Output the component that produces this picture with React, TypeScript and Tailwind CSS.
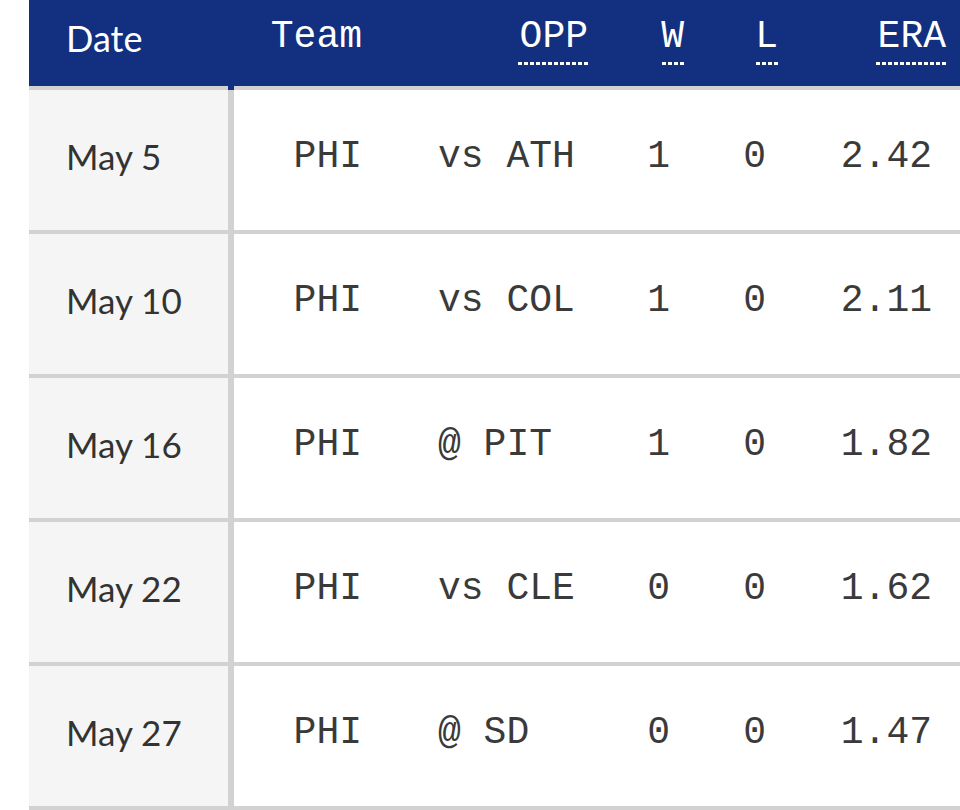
import React from "react";

const rows = [
  ["May 5", "PHI", "vs ATH", "1", "0", "2.42"],
  ["May 10", "PHI", "vs COL", "1", "0", "2.11"],
  ["May 16", "PHI", "@ PIT", "1", "0", "1.82"],
  ["May 22", "PHI", "vs CLE", "0", "0", "1.62"],
  ["May 27", "PHI", "@ SD", "0", "0", "1.47"],
];

const mono = "font-['Liberation_Mono',monospace]";
const sans = "font-['Lato','Open_Sans',sans-serif]";

function Dots({ w }: { w: string }) {
  return (
    <div
      className={`h-[3px] mt-[5px] ml-auto ${w} bg-[repeating-linear-gradient(90deg,#ffffff_0px,#ffffff_4px,transparent_4px,transparent_6px)]`}
    />
  );
}

export default function App() {
  return (
    <div className="w-[960px] h-[810px] bg-white pl-[29px] overflow-hidden">
      <div className="flex h-[90px]">
        <div className={`w-[199px] bg-[#12307f] border-b-4 border-[#d2d2d2] pl-[37px] pt-[18px] text-white text-[36px] leading-[40px] ${sans}`}>
          Date
        </div>
        <div className="w-[6px] bg-[#12307f]" />
        <div className={`flex-1 flex bg-[#12307f] border-b-4 border-[#d2d2d2] text-white text-[38px] leading-[40px] ${mono}`}>
          <div className="w-[128px] text-right pt-[17px]">Team</div>
          <div className="w-[238px] pr-[12px] pt-[17px] flex flex-col items-end">
            <span>OPP</span>
            <Dots w="w-[70px]" />
          </div>
          <div className="w-[100px] pr-[16px] pt-[17px] flex flex-col items-end">
            <span>W</span>
            <Dots w="w-[22px]" />
          </div>
          <div className="w-[90px] pr-[12px] pt-[17px] flex flex-col items-end">
            <span>L</span>
            <Dots w="w-[22px]" />
          </div>
          <div className="w-[170px] pr-[14px] pt-[17px] flex flex-col items-end">
            <span>ERA</span>
            <Dots w="w-[70px]" />
          </div>
        </div>
      </div>
      {rows.map((r, i) => (
        <div key={i} className="flex h-[144px]">
          <div className={`w-[199px] bg-[#f5f5f5] border-b-4 border-[#d2d2d2] pl-[37px] pb-[8px] flex items-center text-[#333333] text-[35px] ${sans}`}>
            {r[0]}
          </div>
          <div className="w-[6px] bg-[#d2d2d2]" />
          <div className={`flex-1 flex items-center pb-[8px] border-b-4 border-[#d2d2d2] text-[#3a3a3a] text-[38px] ${mono}`}>
            <div className="w-[128px] text-right">{r[1]}</div>
            <div className="w-[238px] pl-[76px] whitespace-pre">{r[2]}</div>
            <div className="w-[100px] pr-[30px] text-right">{r[3]}</div>
            <div className="w-[90px] pr-[24px] text-right">{r[4]}</div>
            <div className="w-[170px] pr-[28px] text-right">{r[5]}</div>
          </div>
        </div>
      ))}
    </div>
  );
}
